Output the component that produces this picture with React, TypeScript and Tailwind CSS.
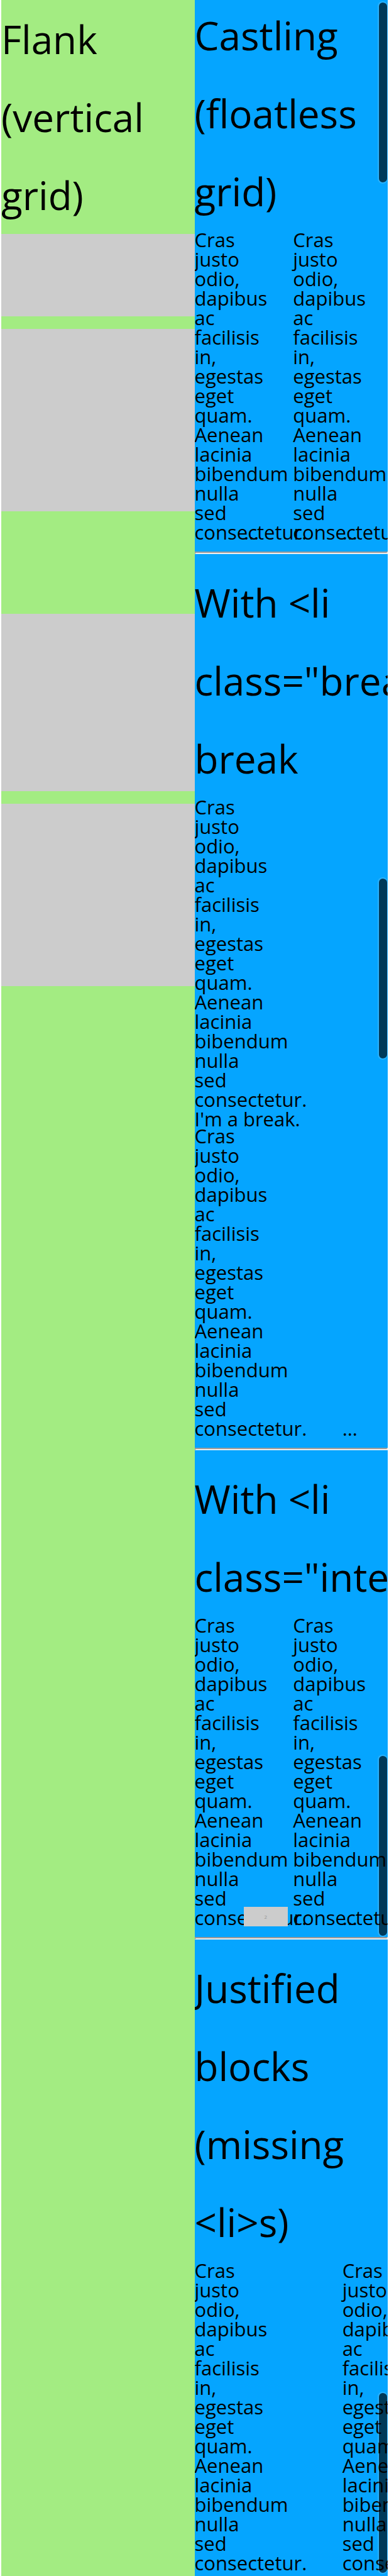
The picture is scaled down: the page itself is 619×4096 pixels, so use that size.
import type { ReactNode } from "react";

const WORDS =
  "Cras justo odio, dapibus ac facilisis in, egestas eget quam. Aenean lacinia bibendum nulla sed consectetur.";

function Title({ children }: { children: ReactNode }) {
  return <h2 className="text-[62px] leading-[124px]">{children}</h2>;
}

/* Each word of the sample copy sits on its own line of the narrow column. */
function Copy({ className = "" }: { className?: string }) {
  return (
    <li className={`flex w-0 flex-col ${className}`}>
      {WORDS.split(" ").map((word) => (
        <span key={word}>{word} </span>
      ))}
    </li>
  );
}

function Dots({ className = "" }: { className?: string }) {
  return <li className={`self-end ${className}`}>…</li>;
}

function Row({ children, className = "" }: { children: ReactNode; className?: string }) {
  return <ul className={`grid grid-cols-4 gap-x-[6px] ${className}`}>{children}</ul>;
}

function Rule() {
  return (
    <hr className="my-[15px] h-1 border-2 border-t-[#9a9a9a] border-r-[#eeeeee] border-b-[#eeeeee] border-l-[#9a9a9a]" />
  );
}

function Thumb({ className }: { className: string }) {
  return (
    <div
      aria-hidden="true"
      className={`absolute right-0 h-[290px] w-4 rounded-full border-2 border-r border-white/15 bg-black/65 bg-clip-padding ${className}`}
    />
  );
}

export default function App() {
  return (
    <main className="grid min-h-screen grid-cols-2 bg-white px-[2px] font-['Open_Sans',sans-serif] text-[31px] leading-[31px] text-black">
      <section className="bg-[#a3ec82]">
        <Title>Flank (vertical grid)</Title>
        <div className="h-[131px] bg-[#cccccc]" />
        <div className="mt-5 h-[290px] bg-[#cccccc]" />
        <div className="mt-[163px] h-[282px] bg-[#cccccc]" />
        <div className="mt-5 h-[290px] bg-[#cccccc]" />
      </section>

      <section className="relative overflow-hidden bg-[#05a5ff]">
        <div className="-mt-[6px]">
          <Title>Castling (floatless grid)</Title>
          <Row>
            <Copy />
            <Dots />
            <Copy />
            <Dots />
          </Row>
          <Rule />

          <Title>With &lt;li class="break"&gt; break</Title>
          <Row>
            <Copy />
            <li className="col-span-4">I'm a break.</li>
          </Row>
          <Row className="-mt-1">
            <Copy />
            <Dots className="col-start-4" />
          </Row>
          <Rule />

          <Title>With &lt;li class="interrupt"&gt;</Title>
          <Row>
            <Copy />
            <li className="z-10 mb-0.5 flex h-[31px] w-[70px] items-center justify-center self-end bg-[#cccccc] text-[8px] leading-none text-[#969696]">
              2
            </li>
            <Copy />
            <Dots />
          </Row>
          <Rule />

          <Title>Justified blocks (missing &lt;li&gt;s)</Title>
          <Row>
            <Copy />
            <Copy className="col-start-4" />
          </Row>
        </div>

        <Thumb className="top-[2px]" />
        <Thumb className="top-[1395px]" />
        <Thumb className="top-[2790px]" />
        <Thumb className="top-[3803px]" />
      </section>
    </main>
  );
}
